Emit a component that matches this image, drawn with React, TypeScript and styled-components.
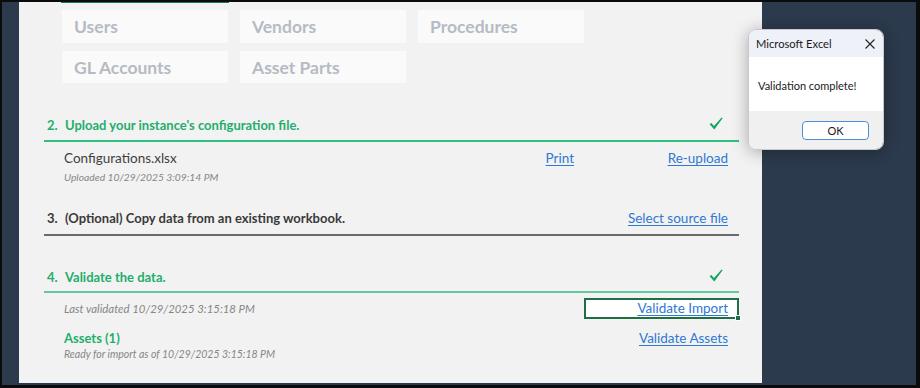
import React from "react";
import styled, { createGlobalStyle } from "styled-components";

const Global = createGlobalStyle`
  html, body { margin: 0; padding: 0; }
  body { font-family: "Lato", "Liberation Sans", sans-serif; }
  * { box-sizing: border-box; }
`;

const GREEN = "#1fae6c";
const LINK = "#2f78d4";

const Frame = styled.div`
  position: relative;
  width: 920px;
  height: 388px;
  background: #2b3a4c;
  border-style: solid;
  border-color: #0b0b0b;
  border-width: 2px 4px 3px 2px;
  padding-left: 17px;
  display: flex;
  align-items: flex-start;
  overflow: hidden;
`;

const Sheet = styled.div`
  width: 743px;
  height: 381px;
  background: #f2f2f2;
  display: flex;
  flex-direction: column;
  font-family: "Lato", "Liberation Sans", sans-serif;
  font-size: 13.5px;
  line-height: 17px;
`;

const TopAccent = styled.div`
  margin-left: 42px;
  width: 168px;
  height: 1px;
  background: #1e7a4c;
`;

const TileGrid = styled.div`
  margin-top: 7px;
  margin-left: 43px;
  display: grid;
  grid-template-columns: repeat(3, 166px);
  grid-template-rows: 33px 32px;
  column-gap: 12px;
  row-gap: 8px;
`;

const Tile = styled.div`
  background: #fafafa;
  padding-left: 12px;
  font-size: 17.5px;
  font-weight: 700;
  line-height: 33px;
  color: #b6bbc3;
`;

const Sections = styled.div`
  margin-left: 25px;
  width: 695px;
  display: flex;
  flex-direction: column;
`;

const HeadingRow = styled.div<{ $line: string; $gap: number; $pad: number }>`
  margin-top: ${(p) => p.$gap}px;
  display: flex;
  align-items: baseline;
  padding: 0 0 ${(p) => p.$pad}px 3px;
  border-bottom: 2px solid ${(p) => p.$line};
`;

const Num = styled.span<{ $color: string }>`
  width: 18px;
  font-size: 13px;
  font-weight: 700;
  line-height: 16px;
  color: ${(p) => p.$color};
`;

const HeadingText = styled.span<{ $color: string }>`
  flex: 1;
  font-size: 13px;
  font-weight: 700;
  line-height: 16px;
  color: ${(p) => p.$color};
`;

const Check = styled.svg`
  margin-right: 16px;
  display: block;
`;

const DetailRow = styled.div<{ $gap: number }>`
  margin-top: ${(p) => p.$gap}px;
  padding-left: 20px;
  display: flex;
  align-items: baseline;
`;

const FileName = styled.span`
  flex: 1;
  font-size: 13.5px;
  line-height: 17px;
  color: #3f3f3f;
`;

const Note = styled.div<{ $gap?: number; $grow?: boolean; $size: number }>`
  margin-top: ${(p) => p.$gap ?? 0}px;
  padding-left: ${(p) => (p.$grow ? 0 : 20)}px;
  flex: ${(p) => (p.$grow ? 1 : "none")};
  font-size: ${(p) => p.$size}px;
  font-style: italic;
  line-height: 13px;
  color: #868686;
`;

const Link = styled.a`
  font-size: 13.5px;
  line-height: 17px;
  color: ${LINK};
  text-decoration: underline;
  text-underline-offset: 2px;
  cursor: pointer;
`;

const LinkCell = styled.div<{ $w?: number }>`
  width: ${(p) => (p.$w ? `${p.$w}px` : "auto")};
  padding-right: 11px;
  text-align: right;
  font-size: 13.5px;
  line-height: 17px;
`;

const SelectedCell = styled.div`
  position: relative;
  width: 155px;
  height: 21px;
  border: 2px solid #1f6f45;
  background: #ffffff;
  padding-right: 9px;
  text-align: right;
  font-size: 13.5px;
  line-height: 17px;
`;

const Handle = styled.span`
  position: absolute;
  right: -4px;
  bottom: -4px;
  width: 6px;
  height: 6px;
  background: #1f6f45;
  border: 1px solid #ffffff;
`;

const AssetsLabel = styled.span`
  flex: 1;
  font-size: 13px;
  font-weight: 700;
  line-height: 16px;
  color: ${GREEN};
`;

const Dialog = styled.div`
  position: absolute;
  left: 746px;
  top: 27px;
  width: 136px;
  height: 121px;
  border: 1px solid #c9c9cc;
  border-radius: 8px;
  overflow: hidden;
  display: flex;
  flex-direction: column;
  box-shadow: 0 2px 16px rgba(0, 0, 0, 0.3);
  font-family: "Lato", "Noto Sans", sans-serif;
  color: #1a1a1a;
`;

const TitleBar = styled.div`
  height: 27px;
  background: #eff1f8;
  display: flex;
  align-items: center;
  justify-content: space-between;
  padding: 0 8px 0 7px;
  font-size: 11.2px;
`;

const Body = styled.div`
  height: 54px;
  background: #ffffff;
  padding: 22px 0 0 9px;
  font-size: 11px;
  line-height: 14px;
`;

const Footer = styled.div`
  flex: 1;
  background: #f0f0f0;
  display: flex;
  justify-content: flex-end;
  align-items: flex-start;
  padding: 10px 14px 0 0;
`;

const OkButton = styled.button`
  width: 67px;
  height: 19px;
  background: #ffffff;
  border: 1px solid #4b8fd9;
  border-radius: 4px;
  font-family: "Lato", "Noto Sans", sans-serif;
  font-size: 11px;
  color: #1a1a1a;
  padding: 0;
`;

const CheckMark = () => (
  <Check width="14" height="13" viewBox="0 0 14 13">
    <path
      d="M0.6 7.2 L2.2 6 L5 8.9 L12.6 0.4 L13.6 1.3 L5.3 12.4 Z"
      fill="#13a560"
    />
  </Check>
);

const CloseIcon = () => (
  <svg width="10" height="10" viewBox="0 0 10 10">
    <path d="M0.5 0.5 L9.5 9.5 M9.5 0.5 L0.5 9.5" stroke="#222" strokeWidth="1.1" />
  </svg>
);

export default function App() {
  return (
    <>
      <Global />
      <Frame>
        <Sheet>
          <TopAccent />
          <TileGrid>
            <Tile>Users</Tile>
            <Tile>Vendors</Tile>
            <Tile>Procedures</Tile>
            <Tile>GL Accounts</Tile>
            <Tile>Asset Parts</Tile>
          </TileGrid>
          <Sections>
            <HeadingRow $line="#2fbf80" $gap={34} $pad={7}>
              <Num $color={GREEN}>2.</Num>
              <HeadingText $color={GREEN}>Upload your instance's configuration file.</HeadingText>
              <CheckMark />
            </HeadingRow>
            <DetailRow $gap={8}>
              <FileName>Configurations.xlsx</FileName>
              <Link>Print</Link>
              <LinkCell $w={165}>
                <Link>Re-upload</Link>
              </LinkCell>
            </DetailRow>
            <Note $gap={4} $size={10.3}>Uploaded 10/29/2025 3:09:14 PM</Note>
            <HeadingRow $line="#6b6b6b" $gap={26} $pad={7}>
              <Num $color="#3a3a3a">3.</Num>
              <HeadingText $color="#3a3a3a">(Optional) Copy data from an existing workbook.</HeadingText>
              <LinkCell>
                <Link>Select source file</Link>
              </LinkCell>
            </HeadingRow>
            <HeadingRow $line="#62c99e" $gap={33} $pad={6}>
              <Num $color={GREEN}>4.</Num>
              <HeadingText $color={GREEN}>Validate the data.</HeadingText>
              <CheckMark />
            </HeadingRow>
            <DetailRow $gap={5}>
              <Note $grow $size={11.4}>Last validated 10/29/2025 3:15:18 PM</Note>
              <SelectedCell>
                <Link>Validate Import</Link>
                <Handle />
              </SelectedCell>
            </DetailRow>
            <DetailRow $gap={11}>
              <AssetsLabel>Assets (1)</AssetsLabel>
              <LinkCell $w={155}>
                <Link>Validate Assets</Link>
              </LinkCell>
            </DetailRow>
            <Note $gap={1} $size={10.5}>Ready for import as of 10/29/2025 3:15:18 PM</Note>
          </Sections>
        </Sheet>
        <Dialog>
          <TitleBar>
            <span>Microsoft Excel</span>
            <CloseIcon />
          </TitleBar>
          <Body>Validation complete!</Body>
          <Footer>
            <OkButton>OK</OkButton>
          </Footer>
        </Dialog>
      </Frame>
    </>
  );
}
